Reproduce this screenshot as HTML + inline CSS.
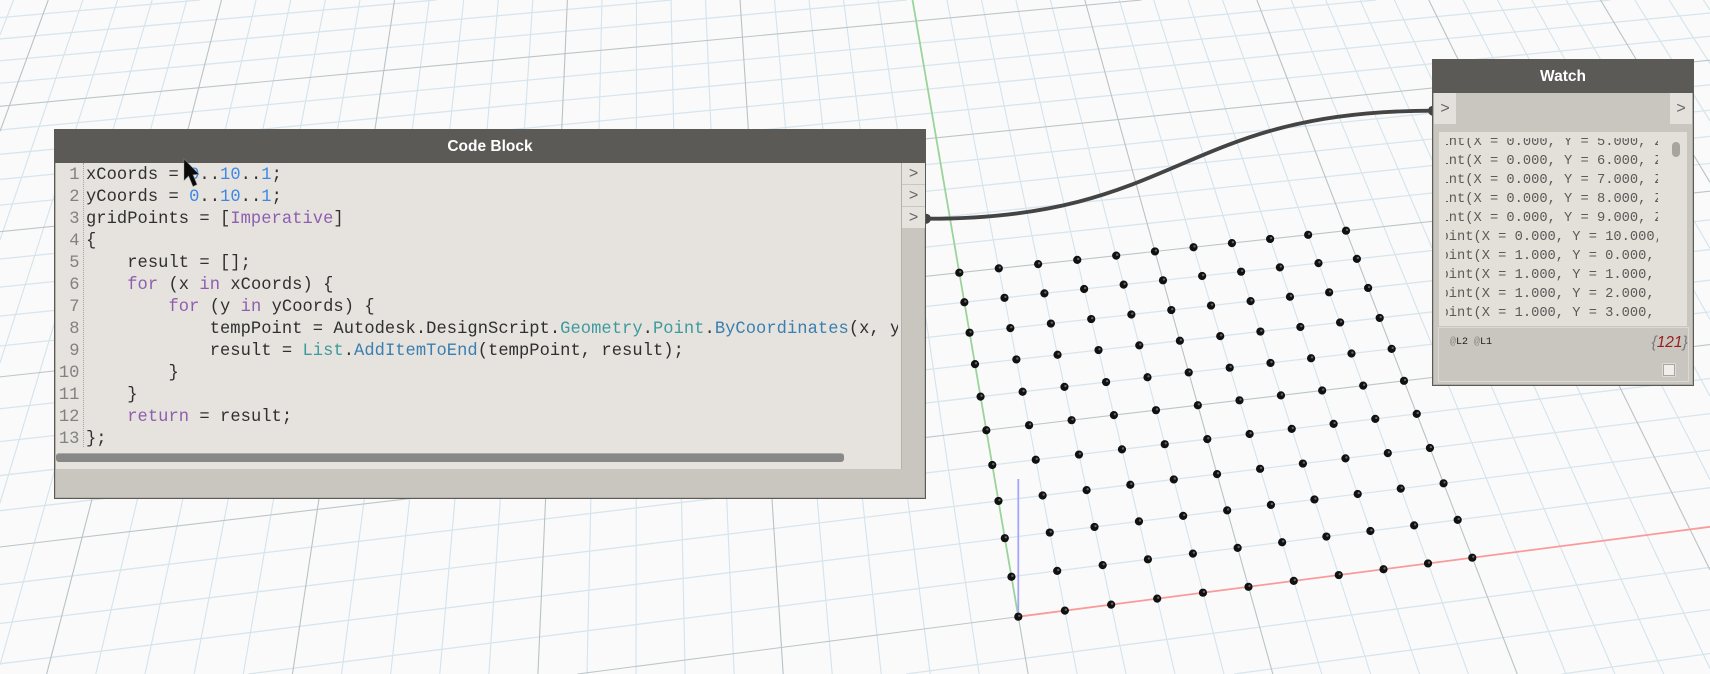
<!DOCTYPE html>
<html><head><meta charset="utf-8"><style>
html,body{margin:0;padding:0;width:1710px;height:674px;overflow:hidden;background:#fafafa}
.a{position:absolute}
#g{position:absolute;left:0;top:0}
.mono{font-family:"Liberation Mono",monospace}
.title{color:#fff;font:bold 15.5px/35px "Liberation Sans",sans-serif;text-align:center}
pre{margin:0;font-family:"Liberation Mono",monospace;font-size:17.1px;letter-spacing:.05px;line-height:22px;color:#303030}
.n{color:#3d88e6}.k{color:#8e5fae}.c{color:#3f9a9e}.m{color:#3a7fae}
.gt{font:16px/22px "Liberation Sans",sans-serif;color:#666;text-align:center}
.w{position:absolute;white-space:pre;font-family:"Liberation Mono",monospace;font-size:13.73px;line-height:19px;color:#5c5a58}
</style></head><body>
<svg id="g" width="1710" height="674" viewBox="0 0 1710 674"></svg>

<!-- Code Block -->
<div class="a" style="left:54px;top:129px;width:872px;height:370px;background:#c9c5bf;box-shadow:inset 0 0 0 1px #5c5a57,inset 0 0 0 2px #b5b1ab"></div>
<div class="a title" style="left:54px;top:129px;width:872px;height:34px;background:#5c5a57">Code Block</div>
<div class="a" style="left:56px;top:163px;width:842px;height:306px;overflow:hidden;background:#e6e3df">
  <pre class="a" style="left:-2px;top:2px;width:25.5px;text-align:right;color:#828282">1
2
3
4
5
6
7
8
9
10
11
12
13</pre>
  <div class="a" style="left:27px;top:0;height:284px;border-left:1px dotted #a5a5a5"></div>
  <pre class="a" style="left:30px;top:2px">xCoords = <span class="n">0</span>..<span class="n">10</span>..<span class="n">1</span>;
yCoords = <span class="n">0</span>..<span class="n">10</span>..<span class="n">1</span>;
gridPoints = [<span class="k">Imperative</span>]
{
    result = [];
    <span class="k">for</span> (x <span class="k">in</span> xCoords) {
        <span class="k">for</span> (y <span class="k">in</span> yCoords) {
            tempPoint = Autodesk.DesignScript.<span class="c">Geometry</span>.<span class="c">Point</span>.<span class="m">ByCoordinates</span>(x, y, 0);
            result = <span class="c">List</span>.<span class="m">AddItemToEnd</span>(tempPoint, result);
        }
    }
    <span class="k">return</span> = result;
};</pre>
  <div class="a" style="left:0;top:290px;width:788px;height:8px;background:#888;border-top:1px solid #aaa;border-radius:3px"></div>
</div>
<div class="a" style="left:898px;top:163px;width:3px;height:306px;background:#e6e3df"></div>
<div class="a" style="left:901px;top:163px;width:1px;height:306px;background:#b5b1ab"></div>
<div class="a gt" style="left:902px;top:163px;width:23px;height:21px;background:#e6e3df;border-bottom:1px solid #c9c5bf">&gt;</div>
<div class="a gt" style="left:902px;top:185px;width:23px;height:21px;background:#e6e3df;border-bottom:1px solid #c9c5bf">&gt;</div>
<div class="a gt" style="left:902px;top:207px;width:23px;height:21px;background:#e6e3df">&gt;</div>

<!-- Watch -->
<div class="a" style="left:1432px;top:59px;width:262px;height:327px;background:#c9c5bf;box-shadow:inset 0 0 0 1px #5c5a57,inset 0 0 0 2px #b0aca6"></div>
<div class="a title" style="left:1432px;top:59px;width:262px;height:34px;background:#5c5a57">Watch</div>
<div class="a gt" style="left:1434px;top:93px;width:22px;height:31px;line-height:31px;background:#e4e1dc">&gt;</div>
<div class="a gt" style="left:1670px;top:93px;width:22px;height:31px;line-height:31px;background:#e4e1dc">&gt;</div>
<div class="a" style="left:1439px;top:132px;width:248px;height:194px;background:#e3e0da"></div>
<div class="a" style="left:1445.7px;top:138px;width:212.3px;height:188px;overflow:hidden">
  <div class="w" style="left:-21.6px;top:-5px">Point(X = 0.000, Y = 5.000, Z = 0.000)</div>
  <div class="w" style="left:-21.6px;top:14px">Point(X = 0.000, Y = 6.000, Z = 0.000)</div>
  <div class="w" style="left:-21.6px;top:33px">Point(X = 0.000, Y = 7.000, Z = 0.000)</div>
  <div class="w" style="left:-21.6px;top:52px">Point(X = 0.000, Y = 8.000, Z = 0.000)</div>
  <div class="w" style="left:-21.6px;top:71px">Point(X = 0.000, Y = 9.000, Z = 0.000)</div>
  <div class="w" style="left:-13.4px;top:90px">Point(X = 0.000, Y = 10.000, Z = 0.000)</div>
  <div class="w" style="left:-13.4px;top:109px">Point(X = 1.000, Y = 0.000, Z = 0.000)</div>
  <div class="w" style="left:-13.4px;top:128px">Point(X = 1.000, Y = 1.000, Z = 0.000)</div>
  <div class="w" style="left:-13.4px;top:147px">Point(X = 1.000, Y = 2.000, Z = 0.000)</div>
  <div class="w" style="left:-13.4px;top:166px">Point(X = 1.000, Y = 3.000, Z = 0.000)</div>
</div>
<div class="a" style="left:1672px;top:142px;width:8px;height:15px;background:#a8a5a0;border-radius:4px"></div>
<div class="a" style="left:1438px;top:327px;width:249px;height:53px;border:1px solid #dcd9d4"></div>
<div class="a mono" style="left:1450px;top:337px;font-size:10px;line-height:12px;color:#222;white-space:pre"><span style="color:#8a8884">@</span>L2 <span style="color:#8a8884">@</span>L1</div>
<div class="a" style="left:1651.5px;top:333px;font:italic 15.5px/20px 'Liberation Sans',sans-serif;color:#7a7a7a;white-space:pre">{<span style="color:#9a1c1c">121</span>}</div>
<div class="a" style="left:1663px;top:364px;width:10px;height:10px;background:#efeeeb;border:1px solid #a9a6a1;box-shadow:0 0 0 .5px #f4f3f1"></div>

<svg class="a" style="left:0;top:0" width="1710" height="674" viewBox="0 0 1710 674">
  <path d="M184 159 L184 180.5 L188.6 176 L193 186.5 L197 184.5 L193 174.8 L199 174.2 Z" fill="#0a0a0a" stroke="#9a9a9a" stroke-opacity=".5" stroke-width=".8"/>
</svg>

<script>
(function(){
var x0=1018.3,y0=616.7,x1=1472.3,y1=557.7,x2=1346,y2=230.7,x3=959.3,y3=272.7;
var sx=x0-x1+x2-x3,sy=y0-y1+y2-y3,dx1=x1-x2,dx2=x3-x2,dy1=y1-y2,dy2=y3-y2;
var den=dx1*dy2-dx2*dy1,g=(sx*dy2-dx2*sy)/den,h=(dx1*sy-sx*dy1)/den;
var a=x1-x0+g*x1,b=x3-x0+h*x3,d=y1-y0+g*y1,e=y3-y0+h*y3;
function P(X,Y){var u=X/10,v=Y/10,w=1+g*u+h*v;return [(a*u+b*v+x0)/w,(d*u+e*v+y0)/w];}
function clip(A,B){
  var t0=0,t1=1,dx=B[0]-A[0],dy=B[1]-A[1];
  var p=[-dx,dx,-dy,dy],q=[A[0],1710-A[0],A[1],674-A[1]];
  for(var k=0;k<4;k++){
    if(p[k]===0){if(q[k]<0)return null;}
    else{var r=q[k]/p[k];
      if(p[k]<0){if(r>t1)return null;if(r>t0)t0=r;}
      else{if(r<t0)return null;if(r<t1)t1=r;}}
  }
  return [[A[0]+t0*dx,A[1]+t0*dy],[A[0]+t1*dx,A[1]+t1*dy]];
}
function L(A,B,c,s){var C=clip(A,B);if(!C)return '';A=C[0];B=C[1];return '<line x1="'+A[0].toFixed(2)+'" y1="'+A[1].toFixed(2)+'" x2="'+B[0].toFixed(2)+'" y2="'+B[1].toFixed(2)+'" stroke="'+c+'" stroke-width="'+s+'"/>';}
var o='',maj='',XMIN=-90,XMAX=80,YMIN=-10,YMAX=70,i,j;
for(i=XMIN;i<=XMAX;i++){
  var m=(i%5===0);
  var s=L(P(i,YMIN),P(i,YMAX),m?'#b9c2c7':'#d4e3ec',1.1);
  if(m)maj+=s;else o+=s;
}
for(j=YMIN;j<=YMAX;j++){
  var m2=(j%5===0);
  var s2=L(P(XMIN,j),P(XMAX,j),m2?'#bcc5ca':'#d8e5ed',m2?1.1:1.3);
  if(m2)maj+=s2;else o+=s2;
}
o+=maj;
o+=L(P(0,0),P(0,YMAX),'#9bd49b',1.8);
o+=L(P(0,0),P(XMAX,0),'#fb9a9a',1.8);
o+=L(P(0,0),[x0,479],'#a6a6f6',1.8);
var pts='';
for(i=0;i<=10;i++)for(j=0;j<=10;j++){
  var p=P(i,j);
  pts+='<circle cx="'+p[0].toFixed(2)+'" cy="'+p[1].toFixed(2)+'" r="4.1" fill="#111"/>';
  pts+='<circle cx="'+(p[0]+1).toFixed(2)+'" cy="'+(p[1]-.9).toFixed(2)+'" r="1.2" fill="#888" opacity=".7"/>';
}
o+=pts;
o+='<circle cx="926" cy="218.7" r="5" fill="#444"/><circle cx="1433" cy="110.7" r="5" fill="#444"/>';
o+='<path d="M929 218.7C1180 218.7 1180 110.7 1432 110.7" fill="none" stroke="#444" stroke-width="3.8"/>';
document.getElementById('g').innerHTML=o;
})();
</script>
</body></html>
